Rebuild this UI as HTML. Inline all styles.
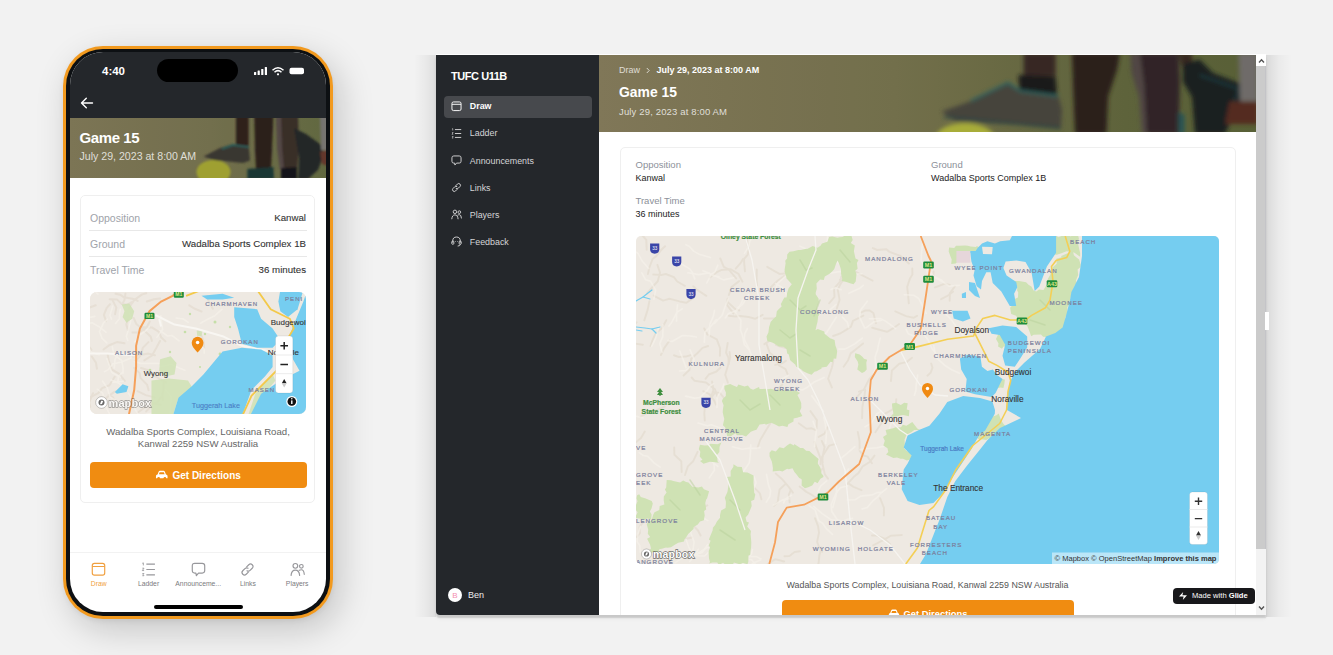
<!DOCTYPE html>
<html><head><meta charset="utf-8">
<style>
*{box-sizing:border-box;margin:0;padding:0}
html,body{width:1333px;height:655px;overflow:hidden}
body{background:#f2f2f2;position:relative;font-family:"Liberation Sans",sans-serif;color:#222}
.a{position:absolute}
.t{position:absolute;white-space:nowrap;line-height:1}
/* phone */
#ph-shadow{display:none}
#ph-o{left:63px;top:46px;width:270px;height:573px;border-radius:40px;background:#f29a1f;box-shadow:7px 11px 34px rgba(0,0,0,.19),0 2px 5px rgba(0,0,0,.06)}
#ph-b{left:66px;top:49px;width:264px;height:567px;border-radius:37px;background:#0d1013}
#ph-s{left:70px;top:52px;width:256px;height:560px;border-radius:33px;background:#fff;overflow:hidden}
/* desktop */
#win-shadow{left:436px;top:55px;width:830px;height:560px;border-radius:0 0 0 4px;box-shadow:0 2.5px 1.5px rgba(0,0,0,.15),0 4px 5px rgba(0,0,0,.03),0 -1px 0 rgba(255,255,255,.9)}
#shL{left:414px;top:55px;width:22px;height:562px;background:linear-gradient(to right,rgba(0,0,0,0),rgba(0,0,0,.035) 50%,rgba(0,0,0,.085))}
#shR{left:1266px;top:55px;width:26px;height:562px;background:linear-gradient(to left,rgba(0,0,0,0),rgba(0,0,0,.03) 50%,rgba(0,0,0,.1))}
#side{left:436px;top:55px;width:163px;height:560px;background:#24272b;border-radius:0 0 0 4px}
#main{left:599px;top:55px;width:657px;height:560px;background:#fff;overflow:hidden}
#sb{left:1256px;top:55px;width:10px;height:560px;background:#f3f3f3}
</style></head>
<body>
<div id="ph-shadow" class="a"></div>
<div id="ph-o" class="a"></div>
<div id="ph-b" class="a"></div>
<div id="ph-s" class="a">
  <div class="a" style="left:0;top:0;width:256px;height:66px;background:#24272b"></div>
  <div class="t" style="left:32px;top:14px;font-size:11.5px;font-weight:bold;color:#fff">4:40</div>
  <div class="a" style="left:87px;top:7px;width:81px;height:23px;border-radius:12px;background:#000"></div>
  <svg class="a" style="left:183px;top:14px" width="54" height="10" viewBox="0 0 54 10">
    <rect x="1" y="6" width="2.2" height="3" rx=".5" fill="#fff"/>
    <rect x="4.6" y="4.5" width="2.2" height="4.5" rx=".5" fill="#fff"/>
    <rect x="8.2" y="3" width="2.2" height="6" rx=".5" fill="#fff"/>
    <rect x="11.8" y="1" width="2.2" height="8" rx=".5" fill="#fff"/>
    <path d="M19.5 4.2 Q25 -0.8 30.5 4.2" stroke="#fff" stroke-width="1.5" fill="none"/>
    <path d="M21.5 6.2 Q25 3 28.5 6.2" stroke="#fff" stroke-width="1.5" fill="none"/>
    <circle cx="25" cy="8.3" r="1.1" fill="#fff"/>
    <rect x="36.5" y="1.8" width="14.5" height="6.5" rx="2" fill="#fff"/>
  </svg>
  <svg class="a" style="left:10px;top:45px" width="14" height="12" viewBox="0 0 14 12">
    <path d="M12.5 6 H1.8 M6.3 1.3 L1.5 6 L6.3 10.7" stroke="#fff" stroke-width="1.4" fill="none" stroke-linecap="round" stroke-linejoin="round"/>
  </svg>
  <div class="a" style="left:0;top:66px;width:256px;height:60px;overflow:hidden"><svg width="256" height="60" viewBox="0 0 256 60" style="display:block">
<defs><linearGradient id="pg1" x1="0" x2="1" y1="0" y2="0"><stop offset="0" stop-color="#847d5b"/><stop offset=".55" stop-color="#7a7652"/><stop offset="1" stop-color="#686f45"/></linearGradient>
<filter id="bl1" x="-5%" y="-5%" width="110%" height="110%"><feGaussianBlur stdDeviation="1"/></filter></defs>
<rect width="256" height="60" fill="url(#pg1)"/><g filter="url(#bl1)">
<ellipse cx="143.5" cy="54" rx="17" ry="12" fill="#a9ab36"/>
<rect x="166" y="-2" width="12.6" height="30" fill="#30241f"/>
<path d="M133.6,38.5 L150,30 L163,26 L178.6,27.8 L180,42.4 L173,45 L143.8,42 Z" fill="#3d3b35"/>
<path d="M152,31 L163,27 L178.6,29" stroke="#2a6a66" stroke-width="1.6" fill="none"/>
<path d="M184.3,-2 L203.4,-2 L202,30 L201,52 L186,52 L185,30 Z" fill="#2d201d"/>
<path d="M177.5,51 L203.4,49 L204,61 L177.5,61 Z" fill="#1d3a39"/>
<path d="M206,-2 L228,-2 L229,30 L227,52 L212,52 L208,30 Z" fill="#3e302c"/>
<path d="M206,-2 L211,-2 L212,30 L214,52 L210,52 L207,30 Z" fill="#5a4e4b"/>
<path d="M211,50 L227,49 L227,61 L211,61 Z" fill="#17191a"/>
<path d="M224,10 L236,16 L250,26 L254,36 L248,52 L238,61 L228,61 L229,40 L226,22 Z" fill="#262c2b"/>
<path d="M250,-2 L258,-2 L258,32 L251,32 Z" fill="#7e7c77"/>
<path d="M250,34 L258,32 L258,48 L252,46 Z" fill="#6a3a2e"/>
</g><rect width="256" height="60" fill="rgba(0,0,0,.06)"/>
</svg></div>
  <div class="t" style="left:9.5px;top:78px;font-size:15px;font-weight:bold;color:#fff;letter-spacing:-.4px">Game 15</div>
  <div class="t" style="left:9.5px;top:99px;font-size:10.6px;color:rgba(255,255,255,.78)">July 29, 2023 at 8:00 AM</div>
  <div class="a" style="left:10px;top:143px;width:235px;height:308px;border:1px solid #efefef;border-radius:5px"></div>
  <div class="a" style="left:18.5px;top:178px;width:218px;height:1px;background:#e8e8e8"></div>
  <div class="a" style="left:18.5px;top:204px;width:218px;height:1px;background:#e8e8e8"></div>
  <div class="t" style="left:20px;top:161px;font-size:10.5px;color:#a0a3aa">Opposition</div>
  <div class="t" style="right:20px;top:161px;font-size:9.7px;color:#333;-webkit-text-stroke:.1px #333">Kanwal</div>
  <div class="t" style="left:20px;top:187px;font-size:10.5px;color:#a0a3aa">Ground</div>
  <div class="t" style="right:20px;top:187px;font-size:9.7px;color:#333;-webkit-text-stroke:.1px #333">Wadalba Sports Complex 1B</div>
  <div class="t" style="left:20px;top:213px;font-size:10.5px;color:#a0a3aa">Travel Time</div>
  <div class="t" style="right:20px;top:213px;font-size:9.7px;color:#333;-webkit-text-stroke:.1px #333">36 minutes</div>
  <div class="a" style="left:20px;top:240px;width:216px;height:122px;border-radius:7px;overflow:hidden;background:#eee7dd"><svg width="216" height="122" viewBox="0 0 216 122" style="display:block;font-family:'Liberation Sans',sans-serif"><rect width="216" height="122" fill="#eee9e2"/><g fill="none" stroke="#d9cfbd" stroke-width="2" stroke-linecap="round" stroke-linejoin="round" opacity=".35"><path d="M54.3,68.3 L62.0,63.5 L66.4,55.8 L70.0,49.0"/><path d="M1.8,64.5 L6.0,70.8 L6.9,76.7"/><path d="M37.8,28.0 L36.3,32.4 L37.9,37.9"/><path d="M47.7,8.9 L43.6,7.0 L34.0,5.3 L30.1,2.7 L25.5,1.8"/><path d="M0.1,105.4 L8.3,101.2 L12.1,96.1 L19.4,93.2 L24.7,84.8"/><path d="M44.2,75.9 L49.6,81.1 L50.6,86.1 L57.2,92.9 L58.6,98.2"/><path d="M5.7,13.3 L-2.1,16.1 L-8.7,22.0 L-13.5,25.2"/><path d="M25.5,111.6 L23.0,105.4 L18.6,103.0"/><path d="M70.8,112.7 L61.1,111.1 L54.7,115.5 L47.9,120.5"/><path d="M56.8,9.5 L63.9,7.2 L70.1,6.4"/><path d="M65.0,63.3 L58.3,61.6 L50.2,63.0 L42.7,64.4"/><path d="M59.8,29.5 L56.7,35.3 L48.8,40.6 L42.5,40.5"/><path d="M13.5,57.5 L19.2,53.2 L26.9,50.1 L34.5,51.3"/><path d="M3.0,101.2 L-0.8,110.4 L0.2,114.9"/><path d="M1.3,57.6 L-4.1,50.8 L-9.5,42.8"/><path d="M45.2,69.4 L50.6,63.6 L52.9,55.6 L58.5,50.1"/><path d="M41.8,10.1 L36.9,12.8 L31.6,11.9 L26.9,7.4 L19.7,7.2"/><path d="M34.8,88.9 L28.9,81.6 L21.9,77.7 L18.8,69.0 L17.8,63.2"/><path d="M61.9,48.9 L60.6,44.5 L53.6,38.0 L46.3,31.9 L43.7,26.0"/><path d="M117.3,4.3 L119.0,10.0 L122.9,16.7"/><path d="M64.6,105.4 L55.8,103.1 L47.5,99.2"/><path d="M16.1,29.2 L13.9,22.9 L16.6,16.2 L20.0,12.2"/><path d="M22.7,8.6 L26.3,15.4 L25.1,22.2"/><path d="M114.2,56.4 L113.6,49.8 L112.0,44.8 L108.1,38.1"/><path d="M75.5,49.4 L71.1,45.2 L69.0,39.9 L61.8,35.4 L52.2,35.2"/><path d="M56.3,1.3 L52.1,2.4 L44.2,8.1 L41.1,12.5 L38.8,17.0"/><path d="M73.8,90.1 L73.4,98.7 L72.3,102.6 L72.9,108.2"/><path d="M111.6,19.5 L104.9,16.8 L99.3,13.3"/><path d="M35.5,1.7 L34.4,8.1 L32.4,11.9"/><path d="M56.2,119.4 L59.1,116.3 L61.8,112.4 L67.5,110.1 L71.2,105.2"/><path d="M13.7,108.9 L17.6,104.8 L24.3,99.9 L29.2,98.4 L33.5,95.0"/><path d="M51.0,76.0 L59.2,78.5 L62.1,82.5 L70.7,87.5 L76.0,90.4"/></g><g fill="none" stroke="#f7f3ec" stroke-width="1.6" stroke-linecap="round" stroke-linejoin="round" opacity=".6"><path d="M22.3,54.5 L23.8,62.5 L31.7,68.5 L33.1,76.3 L33.0,81.3"/><path d="M70.9,23.8 L71.7,31.8 L72.7,37.3 L66.9,45.4"/><path d="M8.0,2.1 L0.8,-4.0 L-7.1,-10.0"/><path d="M7.2,97.2 L12.9,101.3 L14.5,109.8 L16.4,115.8 L20.9,124.7"/><path d="M25.6,31.5 L29.5,26.6 L29.4,21.3 L30.3,17.3"/><path d="M22.8,90.2 L29.1,89.7 L33.5,89.2"/><path d="M21.1,87.9 L28.4,91.0 L32.1,93.4"/><path d="M44.3,69.8 L50.8,71.4 L59.1,71.3 L68.8,71.4"/><path d="M38.3,121.9 L42.4,123.0 L47.2,129.9 L56.4,133.4 L60.8,133.9"/><path d="M69.9,74.3 L75.4,73.7 L81.2,72.2 L88.6,75.8 L94.9,78.3"/><path d="M110.5,31.2 L117.2,27.5 L124.8,23.7 L132.0,17.3"/><path d="M70.0,38.6 L77.6,44.0 L82.0,43.5 L89.1,48.9"/><path d="M38.4,101.1 L42.8,108.1 L45.3,113.4 L45.2,117.5 L48.8,123.2"/><path d="M64.2,78.1 L59.8,80.7 L55.5,83.4"/><path d="M60.0,121.6 L59.7,126.1 L53.9,132.1 L52.7,138.7 L49.2,147.5"/><path d="M86.1,26.0 L93.3,27.0 L98.2,30.3"/><path d="M56.5,122.0 L64.6,121.3 L70.2,125.4 L71.2,129.8 L75.6,135.4"/><path d="M16.9,66.5 L19.3,73.3 L21.8,80.5 L30.5,85.1"/><path d="M29.6,60.2 L26.9,64.0 L25.0,67.7 L24.3,75.9"/><path d="M12.6,89.2 L17.3,96.0 L19.9,104.9 L26.6,108.9 L30.4,115.5"/><path d="M27.9,90.4 L28.4,84.5 L32.1,80.7"/><path d="M75.4,97.5 L81.3,104.8 L80.9,109.5 L80.2,118.0 L79.5,126.1"/><path d="M22.7,14.0 L20.0,23.2 L21.5,27.3"/><path d="M4.9,24.4 L-1.4,25.7 L-5.3,28.8 L-8.5,31.4"/><path d="M16.0,40.2 L9.3,34.9 L2.0,30.8 L-3.9,31.8"/><path d="M9.2,62.8 L1.0,60.2 L-0.9,56.6"/><path d="M40.9,65.9 L31.8,70.0 L23.1,71.8 L18.3,77.6 L14.5,79.6"/><path d="M59.3,34.7 L55.6,39.0 L49.5,43.2 L44.7,50.0"/><path d="M37.8,48.5 L36.3,44.4 L38.3,38.1 L40.8,28.6 L39.8,21.5"/><path d="M16.8,50.9 L12.1,46.4 L9.5,39.6 L13.6,30.8 L17.6,27.1"/><path d="M114.2,61.3 L114.2,57.0 L110.5,52.8"/></g><g fill="#c5dfa8"><circle cx="125" cy="30" r="1.5"/><circle cx="115" cy="42" r="1.2"/><circle cx="95" cy="40" r="1.3"/><circle cx="80" cy="60" r="1.2"/><circle cx="130" cy="62" r="1.4"/><circle cx="110" cy="75" r="1.1"/><circle cx="100" cy="22" r="1.2"/><circle cx="140" cy="35" r="1.2"/><circle cx="60" cy="78" r="1.3"/></g><g fill="#cfe2b4" opacity=".85"><path d="M70.1,67.2 L80.7,64.3 L86.5,71.1 L84.5,82.6 L74.9,84.5 L69.2,78.8 Z"/><path d="M61.5,88.4 L78.8,86.5 L98.0,88.4 L103.8,98.0 L88.4,105.7 L82.6,124.9 L61.5,124.9 Z"/><path d="M31.7,12.4 L39.3,11.5 L44.2,19.2 L42.2,26.8 L36.5,30.7 L32.6,24.9 L34.5,19.2 Z"/><path d="M157.6,124.9 L165.3,101.8 L182.6,82.6 L185.5,88.4 L171.1,105.7 L163.4,124.9 Z"/><path d="M106.7,38.8 L112.4,39.3 L111.5,44.2 L107.2,43.8 Z"/></g><g fill="none" stroke="#f8f6f2" stroke-width="2" stroke-linejoin="round"><path d="M65.3,23.0 L84.5,32.6 L105.7,36.5 L132.6,44.2 L151.8,53.8 L171.1,57.6 L190.3,61.5"/><path d="M-2.0,61.5 L17.2,61.5 L46.1,63.4"/><path d="M69.2,26.8 L71.1,34.5"/></g><g fill="#75cdf0"><path d="M82.6,124.9 L88.4,105.7 L101.8,94.2 L113.4,82.6 L123.0,71.1 L132.6,59.5 L151.8,55.7 L171.1,57.6 L182.6,63.4 L182.6,74.9 L174.9,84.5 L161.5,98.0 L151.8,124.9 Z"/><path d="M217.2,-2.0 L213.4,9.5 L203.8,32.6 L198.0,48.0 L201.8,65.3 L209.5,78.8 L190.3,88.4 L171.1,101.8 L159.5,124.9 L217.2,124.9 Z"/><path d="M144.2,15.3 L167.2,17.2 L171.1,26.8 L182.6,36.5 L190.3,48.0 L182.6,55.7 L167.2,55.7 L151.8,51.8 L148.0,36.5 L144.2,24.9 Z"/><path d="M190.3,-2.0 L213.4,-2.0 L207.6,17.2 L198.0,24.9 L190.3,19.2 L188.4,9.5 Z"/><path d="M24.9,99.9 L32.6,92.2 L38.4,94.2 L36.5,99.9 L26.8,101.8 Z"/><path d="M111.5,3.8 L132.6,1.8 L144.2,5.7 L132.6,7.6 L117.2,7.6 Z"/></g><path d="M167.2,-2.0 L180.7,17.2 L199.9,26.8 L203.8,36.5 L198.0,46.1 L190.3,74.9 L180.7,84.5 L161.5,103.8 L151.8,124.9" stroke="#f3c94a" stroke-width="1.8" fill="none"/><path d="M96.1,3.8 L111.5,-2.0" stroke="#f3c94a" stroke-width="1.8" fill="none"/><path d="M38.4,124.9 L44.2,98.0 L46.1,74.9 L46.1,53.8 L49.9,36.5 L59.5,19.2 L71.1,9.5 L82.6,3.8 L90.3,-2.0" stroke="#f5a05a" stroke-width="2" fill="none"/><text x="115.3" y="14.4" font-size="6.1" fill="#7b7f9c" stroke="#7b7f9c" stroke-width="0.2" letter-spacing="1.0" font-weight="normal">CHARMHAVEN</text><text x="130.7" y="52.0" font-size="6.1" fill="#7b7f9c" stroke="#7b7f9c" stroke-width="0.2" letter-spacing="1.0" font-weight="normal">GOROKAN</text><text x="24.9" y="62.5" font-size="6.1" fill="#7b7f9c" stroke="#7b7f9c" stroke-width="0.2" letter-spacing="1.0" font-weight="normal">ALISON</text><text x="158.6" y="100.0" font-size="6.1" fill="#7b7f9c" stroke="#7b7f9c" stroke-width="0.2" letter-spacing="1.0" font-weight="normal">MASEN</text><text x="195.0" y="8.7" font-size="6.1" fill="#7b7f9c" stroke="#7b7f9c" stroke-width="0.2" letter-spacing="1.0" font-weight="normal">PENI</text><text x="180.7" y="32.8" font-size="8" fill="#333" stroke="#333" stroke-width="0.1" letter-spacing="0" font-weight="normal">Budgewoi</text><text x="177.8" y="63.3" font-size="8" fill="#333" stroke="#333" stroke-width="0.1" letter-spacing="0" font-weight="normal">Noraville</text><text x="53.8" y="84.3" font-size="7.8" fill="#333" stroke="#333" stroke-width="0.1" letter-spacing="0" font-weight="normal">Wyong</text><text x="101.8" y="115.5" font-size="7.2" fill="#4a7cc4" stroke="#4a7cc4" stroke-width="0.1" letter-spacing="0" font-weight="normal">Tuggerah Lake</text><rect x="54.5" y="20.7" width="10" height="6.4" rx="1.2" fill="#1f8c3b"/><text x="59.5" y="25.799999999999997" font-size="5" fill="#dfe58a" text-anchor="middle" font-weight="bold">M1</text><rect x="83.8" y="-0.7000000000000002" width="10" height="6.4" rx="1.2" fill="#1f8c3b"/><text x="88.8" y="4.4" font-size="5" fill="#dfe58a" text-anchor="middle" font-weight="bold">M1</text><path d="M107.6,60.5 C102,55 101.8,53 101.8,50.6 A5.8,5.8 0 0 1 113.4,50.6 C113.4,53 113.2,55 107.6,60.5 Z" fill="#f08a12"/><circle cx="107.6" cy="50.5" r="1.8" fill="#fff"/><rect x="185.5" y="44" width="17.3" height="57" rx="3" fill="#fff" stroke="rgba(0,0,0,.12)" stroke-width=".6"/><path d="M185.5,63 H202.8 M185.5,81.7 H202.8" stroke="#e6e6e6" stroke-width=".8"/><path d="M194.2,50 V57.6 M190.4,53.8 H198 M190.4,72.6 H198" stroke="#222" stroke-width="1.5"/><path d="M194.2,87 L196.6,91.3 H191.8 Z" fill="#222"/><path d="M194.2,95.6 L196.6,91.3 H191.8 Z" fill="#ccc"/><circle cx="201.8" cy="109.5" r="5.5" fill="#fff"/><circle cx="201.8" cy="109.5" r="4.3" fill="#111"/><rect x="201.1" y="108.4" width="1.4" height="3.6" fill="#fff"/><circle cx="201.8" cy="106.8" r=".8" fill="#fff"/><circle cx="11.5" cy="110.5" r="5.8" fill="#fff" stroke="rgba(0,0,0,.3)" stroke-width=".7"/><circle cx="11.5" cy="110.5" r="3" fill="#6a6a6a"/><path d="M10,112.2 L11.2,108.7 L13.2,108.9 L12,111.9 Z" fill="#fff"/><g opacity=".7"><text x="18.5" y="114.6" font-size="11" font-weight="bold" fill="#fff" stroke="rgba(60,60,60,.7)" stroke-width="1.3" paint-order="stroke" letter-spacing=".1">mapbox</text></g></svg></div>
  <div class="a" style="left:0;top:374px;width:256px;text-align:center;font-size:9.65px;line-height:11.8px;color:#666">Wadalba Sports Complex, Louisiana Road,<br>Kanwal 2259 NSW Australia</div>
  <div class="a" style="left:19.5px;top:409.5px;width:217px;height:26.5px;border-radius:4px;background:#f08c11"></div>
  <div class="t" style="left:0;top:418px;width:256px;text-align:center;font-size:10px;font-weight:bold;color:#fff"><svg width="13.5" height="10" viewBox="0 0 12 9" style="vertical-align:-1px;margin-right:1px"><path d="M2.2 4 L3.3 1.3 Q3.6 0.6 4.4 0.6 H7.6 Q8.4 0.6 8.7 1.3 L9.8 4 Q11.2 4.3 11.2 5.5 V7.4 H0.8 V5.5 Q0.8 4.3 2.2 4 Z" fill="#fff"/><circle cx="3.2" cy="7.4" r="1.2" fill="#f08c11"/><circle cx="8.8" cy="7.4" r="1.2" fill="#f08c11"/><path d="M3.4 3.9 L4.1 2 H7.9 L8.6 3.9 Z" fill="#f08c11"/></svg> Get Directions</div>
  <div class="a" style="left:0;top:500px;width:256px;height:1px;background:#f2f2f2"></div>
  <svg class="a" style="left:21.15px;top:510px" width="15" height="15" viewBox="0 0 14 14"><rect x="1.2" y="1.2" width="11.6" height="11" rx="2" fill="none" stroke="#f0a040" stroke-width="1.1"/><path d="M1.2 4.2 H12.8" stroke="#f0a040" stroke-width="1.1"/></svg><div class="t" style="left:-1.3500000000000014px;width:60px;text-align:center;top:529px;font-size:6.8px;color:#f0a040">Draw</div><svg class="a" style="left:71.1px;top:510px" width="15" height="15" viewBox="0 0 14 14"><path d="M5 2 H13 M5 7 H13 M5 12 H13" stroke="#98989c" stroke-width="1.1"/><path d="M1.2 1.2 L2.2 0.8 V3.2 M1.2 5.8 H2.8 L1.2 8 H2.9 M1.2 10.8 H2.8 L2 11.8 L2.8 12.8 H1.2" stroke="#98989c" stroke-width=".8" fill="none"/></svg><div class="t" style="left:48.599999999999994px;width:60px;text-align:center;top:529px;font-size:6.8px;color:#7a7a7e">Ladder</div><svg class="a" style="left:120.69999999999999px;top:510px" width="15" height="15" viewBox="0 0 14 14"><path d="M3.5 1.2 H10.5 Q12.8 1.2 12.8 3.5 V8 Q12.8 10.3 10.5 10.3 H7 L5 12.8 L4.6 10.3 H3.5 Q1.2 10.3 1.2 8 V3.5 Q1.2 1.2 3.5 1.2 Z" fill="none" stroke="#98989c" stroke-width="1.1" stroke-linejoin="round"/></svg><div class="t" style="left:98.19999999999999px;width:60px;text-align:center;top:529px;font-size:6.8px;color:#7a7a7e">Announceme...</div><svg class="a" style="left:170.4px;top:510px" width="15" height="15" viewBox="0 0 14 14"><path d="M6.2 4.6 L8.2 2.6 Q9.8 1 11.4 2.6 Q13 4.2 11.4 5.8 L9.4 7.8 Q8 9.2 6.5 8.2" fill="none" stroke="#98989c" stroke-width="1.1" stroke-linecap="round"/><path d="M7.8 9.4 L5.8 11.4 Q4.2 13 2.6 11.4 Q1 9.8 2.6 8.2 L4.6 6.2 Q6 4.8 7.5 5.8" fill="none" stroke="#98989c" stroke-width="1.1" stroke-linecap="round"/></svg><div class="t" style="left:147.9px;width:60px;text-align:center;top:529px;font-size:6.8px;color:#7a7a7e">Links</div><svg class="a" style="left:219.7px;top:510px" width="15" height="15" viewBox="0 0 14 14"><circle cx="5" cy="3.6" r="2.2" fill="none" stroke="#98989c" stroke-width="1.1"/><circle cx="10.6" cy="4" r="1.7" fill="none" stroke="#98989c" stroke-width="1.1"/><path d="M1 12.5 Q1.4 7.5 5 7.5 Q8.6 7.5 9 12.5" fill="none" stroke="#98989c" stroke-width="1.1" stroke-linecap="round"/><path d="M8.6 7.8 Q9.5 7.2 10.6 7.2 Q13 7.2 13.3 11.5" fill="none" stroke="#98989c" stroke-width="1.1" stroke-linecap="round"/></svg><div class="t" style="left:197.2px;width:60px;text-align:center;top:529px;font-size:6.8px;color:#7a7a7e">Players</div>
  <div class="a" style="left:84px;top:553px;width:89px;height:3.5px;border-radius:2px;background:#000"></div>
</div>

<div id="shL" class="a"></div><div id="shR" class="a"></div><div id="win-shadow" class="a"></div>
<div id="side" class="a"><div class="t" style="left:15px;top:15.5px;font-size:11px;font-weight:bold;color:#fff;letter-spacing:-.45px">TUFC U11B</div><div class="a" style="left:7.5px;top:40.5px;width:148px;height:22px;border-radius:4px;background:#47494d"></div><svg class="a" style="left:14.5px;top:45.9px" width="11" height="11" viewBox="0 0 14 14"><rect x="1.2" y="1.2" width="11.6" height="11" rx="2" fill="none" stroke="#fff" stroke-width="1.2"/><path d="M1.2 4.2 H12.8" stroke="#fff" stroke-width="1.2"/></svg><div class="t" style="left:33.8px;top:47.3px;font-size:8.9px;font-weight:bold;color:#fff">Draw</div><svg class="a" style="left:14.5px;top:72.9px" width="11" height="11" viewBox="0 0 14 14"><path d="M5 2 H13 M5 7 H13 M5 12 H13" stroke="#d4d4d6" stroke-width="1.2"/><path d="M1.2 1.2 L2.2 0.8 V3.2 M1.2 5.8 H2.8 L1.2 8 H2.9 M1.2 10.8 H2.8 L2 11.8 L2.8 12.8 H1.2" stroke="#d4d4d6" stroke-width=".8" fill="none"/></svg><div class="t" style="left:33.8px;top:74.3px;font-size:8.9px;font-weight:normal;color:#d4d4d6">Ladder</div><svg class="a" style="left:14.5px;top:100.30000000000001px" width="11" height="11" viewBox="0 0 14 14"><path d="M3.5 1.2 H10.5 Q12.8 1.2 12.8 3.5 V8 Q12.8 10.3 10.5 10.3 H7 L5 12.8 L4.6 10.3 H3.5 Q1.2 10.3 1.2 8 V3.5 Q1.2 1.2 3.5 1.2 Z" fill="none" stroke="#d4d4d6" stroke-width="1.2" stroke-linejoin="round"/></svg><div class="t" style="left:33.8px;top:101.7px;font-size:8.9px;font-weight:normal;color:#d4d4d6">Announcements</div><svg class="a" style="left:14.5px;top:127.1px" width="11" height="11" viewBox="0 0 14 14"><path d="M6.2 4.6 L8.2 2.6 Q9.8 1 11.4 2.6 Q13 4.2 11.4 5.8 L9.4 7.8 Q8 9.2 6.5 8.2" fill="none" stroke="#d4d4d6" stroke-width="1.2" stroke-linecap="round"/><path d="M7.8 9.4 L5.8 11.4 Q4.2 13 2.6 11.4 Q1 9.8 2.6 8.2 L4.6 6.2 Q6 4.8 7.5 5.8" fill="none" stroke="#d4d4d6" stroke-width="1.2" stroke-linecap="round"/></svg><div class="t" style="left:33.8px;top:128.5px;font-size:8.9px;font-weight:normal;color:#d4d4d6">Links</div><svg class="a" style="left:14.5px;top:154.1px" width="11" height="11" viewBox="0 0 14 14"><circle cx="5" cy="3.6" r="2.2" fill="none" stroke="#d4d4d6" stroke-width="1.2"/><circle cx="10.6" cy="4" r="1.7" fill="none" stroke="#d4d4d6" stroke-width="1.2"/><path d="M1 12.5 Q1.4 7.5 5 7.5 Q8.6 7.5 9 12.5" fill="none" stroke="#d4d4d6" stroke-width="1.2" stroke-linecap="round"/><path d="M8.6 7.8 Q9.5 7.2 10.6 7.2 Q13 7.2 13.3 11.5" fill="none" stroke="#d4d4d6" stroke-width="1.2" stroke-linecap="round"/></svg><div class="t" style="left:33.8px;top:155.5px;font-size:8.9px;font-weight:normal;color:#d4d4d6">Players</div><svg class="a" style="left:14.5px;top:181.4px" width="11" height="11" viewBox="0 0 14 14"><path d="M2.2 8.5 V6.5 Q2.2 1.3 7 1.3 Q11.8 1.3 11.8 6.5 V8.5" fill="none" stroke="#d4d4d6" stroke-width="1.2"/><rect x="1" y="6.5" width="2.6" height="4" rx="1" fill="none" stroke="#d4d4d6" stroke-width="1.2"/><rect x="10.4" y="6.5" width="2.6" height="4" rx="1" fill="none" stroke="#d4d4d6" stroke-width="1.2"/><path d="M11.8 10.5 Q11.8 12.8 8.5 12.8" fill="none" stroke="#d4d4d6" stroke-width="1.2"/><circle cx="5.5" cy="7" r=".6" fill="#d4d4d6"/><circle cx="8.5" cy="7" r=".6" fill="#d4d4d6"/></svg><div class="t" style="left:33.8px;top:182.8px;font-size:8.9px;font-weight:normal;color:#d4d4d6">Feedback</div><div class="a" style="left:12px;top:533px;width:14px;height:14px;border-radius:7px;background:#fff"></div><div class="t" style="left:12px;width:14px;text-align:center;top:536.5px;font-size:8px;color:#f48fb1">B</div><div class="t" style="left:32px;top:535.5px;font-size:9px;color:#eee">Ben</div></div>
<div id="main" class="a">
  <div class="a" style="left:0;top:0;width:657px;height:77px;overflow:hidden"><svg width="657" height="77" viewBox="0 0 657 77" style="display:block">
<defs><linearGradient id="dg1" x1="0" x2="1" y1="0" y2="0"><stop offset="0" stop-color="#887f5e"/><stop offset=".45" stop-color="#7a7650"/><stop offset=".8" stop-color="#646a3f"/><stop offset="1" stop-color="#5e663a"/></linearGradient>
<filter id="bl2" x="-5%" y="-5%" width="110%" height="110%"><feGaussianBlur stdDeviation="1.9"/></filter></defs>
<rect width="657" height="77" fill="url(#dg1)"/><g filter="url(#bl2)">
<ellipse cx="366" cy="84" rx="30" ry="16" fill="#b3b83c"/>
<rect x="424.6" y="-2" width="32" height="23" fill="#3b2b25"/>
<path d="M419.5,20 L456.6,21.4 L458,40.6 L420.7,38 Z" fill="#1d1f1f"/>
<path d="M342.5,56.6 L369.5,47 L409,27.8 L420.7,35.5 L459.2,40.6 L463,54.7 L461.8,74 L420.7,70 L356.6,66.2 Z" fill="#4b4841"/>
<path d="M372,46 L409,28 L421,36 L459,41" stroke="#2d6864" stroke-width="2.4" fill="none"/>
<path d="M345,62 L420,69 L462,73" stroke="#2a4a48" stroke-width="2" fill="none"/>
<path d="M473,-2 L521,-2 L518,15 L509,42 L507.5,79 L476,79 L474.5,42 Z" fill="#2e201d"/>
<path d="M531.5,-2 L579.5,-2 L581,27 L579.5,79 L545,79 L542,42 L533,19.5 Z" fill="#34272a"/>
<path d="M531.5,-2 L541,-2 L545,30 L548,79 L543,79 L540,42 L533,19.5 Z" fill="#564c4a"/>
<path d="M579.5,-2 L593,-2 L593,10 L583,12 Z" fill="#3a2a24"/>
<path d="M584,9 L600.5,4.5 L614,18 L645.5,30 L641,46.5 L626,79 L596,79 L593,42 L584,27 Z" fill="#1c2224"/>
<path d="M600,20 L640,34 L630,60" stroke="#22393b" stroke-width="3" fill="none"/>
<path d="M579.5,57 L585.5,60 L585.5,79 L579.5,79 Z" fill="#2a5a5a"/>
<path d="M639.5,-2 L659,-2 L659,46.5 L641,46.5 Z" fill="#76726f"/>
<path d="M630.5,46.5 L659,46.5 L659,69 L626,69 Z" fill="#5a2e24"/>
</g><rect width="657" height="77" fill="rgba(0,0,0,.06)"/>
</svg></div>
  <div class="t" style="left:20px;top:10.5px;font-size:9px;color:rgba(255,255,255,.75)">Draw</div>
  <svg class="a" style="left:46px;top:12px" width="6" height="7" viewBox="0 0 6 7"><path d="M1.8 1 L4.2 3.5 L1.8 6" stroke="rgba(255,255,255,.7)" stroke-width="1" fill="none"/></svg>
  <div class="t" style="left:57.5px;top:10.5px;font-size:9px;font-weight:bold;color:#fff">July 29, 2023 at 8:00 AM</div>
  <div class="t" style="left:20px;top:30.5px;font-size:13.9px;font-weight:bold;color:#fff">Game 15</div>
  <div class="t" style="left:20px;top:52px;font-size:9.5px;letter-spacing:.15px;color:rgba(255,255,255,.78)">July 29, 2023 at 8:00 AM</div>
  <div class="a" style="left:21px;top:92px;width:616px;height:500px;border:1px solid #efefef;border-radius:5px"></div>
  <div class="t" style="left:36.5px;top:105px;font-size:9.5px;color:#8c9099">Opposition</div>
  <div class="t" style="left:36.5px;top:118.5px;font-size:9px;color:#222">Kanwal</div>
  <div class="t" style="left:36.5px;top:141px;font-size:9.5px;color:#8c9099">Travel Time</div>
  <div class="t" style="left:36.5px;top:154.5px;font-size:9px;color:#222">36 minutes</div>
  <div class="t" style="left:332px;top:105px;font-size:9.5px;color:#8c9099">Ground</div>
  <div class="t" style="left:332px;top:118.5px;font-size:9px;color:#222">Wadalba Sports Complex 1B</div>
  <div class="a" style="left:37px;top:181px;width:583px;height:328px;border-radius:5px;overflow:hidden"><svg width="583" height="328" viewBox="636 236 583 328" style="display:block;font-family:'Liberation Sans',sans-serif"><rect x="636" y="236" width="583" height="328" fill="#eee9e2"/><g fill="none" stroke="#d9cfbd" stroke-width="2" stroke-linecap="round" stroke-linejoin="round" opacity=".35"><path d="M757.1,285.5 L756.6,280.8 L756.8,269.5"/><path d="M784.4,556.2 L789.5,556.0 L794.6,552.0 L800.0,551.2"/><path d="M728.9,295.0 L731.4,287.1 L739.1,281.1"/><path d="M767.0,398.9 L775.5,391.2 L782.2,384.6"/><path d="M728.6,364.2 L730.2,357.2 L729.6,352.1"/><path d="M704.2,328.5 L707.2,334.3 L716.8,339.4 L720.1,348.1 L719.9,355.7"/><path d="M673.9,355.3 L678.8,357.0 L685.6,356.6 L690.4,355.3"/><path d="M829.1,303.3 L834.5,296.9 L834.0,288.7 L841.1,280.4 L846.3,277.3"/><path d="M710.8,397.6 L713.4,390.3 L712.1,381.6"/><path d="M880.2,498.3 L884.0,507.8 L883.9,515.6"/><path d="M858.9,391.6 L863.7,390.0 L869.0,379.5 L874.4,373.3"/><path d="M684.9,285.8 L677.2,281.5 L674.1,277.3 L665.8,274.0 L661.4,275.0 L653.2,274.5"/><path d="M846.1,485.3 L854.0,476.6 L858.4,473.1 L862.7,466.3 L869.6,462.2 L874.5,455.6"/><path d="M689.5,525.6 L694.1,526.5 L697.8,530.3 L700.6,535.4"/><path d="M642.8,344.7 L631.6,343.0 L621.0,346.0"/><path d="M691.9,537.5 L687.5,538.4 L680.1,537.8 L670.6,544.3 L661.0,548.2"/><path d="M736.2,278.4 L728.6,269.4 L723.8,266.9 L720.3,258.5"/><path d="M727.9,382.6 L725.2,374.7 L728.6,363.5 L728.5,357.7 L726.1,352.7 L727.7,343.0"/><path d="M778.4,401.9 L782.8,402.5 L788.5,400.2 L791.2,393.8"/><path d="M778.7,391.7 L769.3,395.5 L764.0,404.6 L764.3,413.3"/><path d="M781.7,343.0 L789.8,339.1 L795.4,330.1 L801.7,325.1"/><path d="M895.3,311.4 L906.0,316.1 L913.4,317.8 L917.1,315.8"/><path d="M908.8,303.3 L908.2,296.3 L907.2,286.9 L910.0,278.4 L912.4,274.4 L912.3,268.4"/><path d="M717.4,396.6 L715.0,389.2 L706.1,382.6 L694.4,380.7 L691.7,377.5"/><path d="M872.2,327.7 L883.0,330.8 L887.1,331.8 L893.9,327.8 L899.1,324.0"/><path d="M775.2,364.9 L782.4,363.2 L786.1,360.7"/><path d="M872.0,535.6 L876.3,535.5 L883.5,538.1 L890.2,544.3"/><path d="M787.9,314.3 L781.0,320.3 L779.6,328.2 L774.4,334.7 L770.6,340.2 L764.3,344.2"/><path d="M643.5,521.6 L639.5,527.0 L639.9,533.2 L636.8,537.0"/><path d="M683.6,375.5 L689.4,370.1 L691.2,358.8 L697.3,353.3 L702.6,347.9 L708.1,346.0"/><path d="M799.6,486.5 L806.4,491.9 L811.5,494.6 L814.8,497.0 L822.1,499.5"/><path d="M820.4,464.2 L820.9,458.7 L826.2,450.3 L829.2,445.6 L835.5,444.0"/><path d="M644.8,431.5 L641.0,438.1 L636.0,442.3"/><path d="M775.8,344.8 L780.1,346.6 L790.8,349.4"/><path d="M789.6,502.3 L788.9,494.6 L790.6,490.4"/><path d="M873.1,545.4 L881.8,540.9 L890.6,535.8 L901.8,535.0"/><path d="M863.1,343.5 L856.3,349.0 L850.7,353.4 L848.1,360.2 L843.6,366.7"/><path d="M822.4,468.8 L817.8,474.9 L812.2,476.6 L802.2,479.0"/><path d="M784.1,561.5 L779.5,560.2 L775.3,559.2 L766.0,565.2"/><path d="M861.5,490.2 L853.5,486.8 L848.7,483.6"/><path d="M665.1,246.3 L661.6,249.5 L656.3,256.1 L652.6,259.0 L649.2,268.0 L647.9,274.1"/><path d="M798.4,287.4 L807.7,293.3 L812.4,295.8"/><path d="M709.8,277.5 L716.8,272.1 L721.1,270.1 L730.5,269.2 L738.4,273.8 L742.5,281.7"/><path d="M941.1,299.2 L946.9,296.2 L953.1,291.7"/><path d="M703.2,391.2 L709.4,394.2 L714.2,400.6 L715.9,404.6"/><path d="M686.9,517.1 L697.2,511.3 L707.3,505.4"/><path d="M815.6,430.1 L811.7,428.3 L806.4,428.7 L798.7,423.2"/><path d="M912.0,357.8 L906.5,362.1 L899.2,363.8 L891.9,370.6 L890.9,381.1"/><path d="M818.7,436.9 L824.6,433.6 L827.5,427.3"/><path d="M804.6,256.9 L809.1,261.1 L818.2,260.8 L825.0,261.3 L832.2,263.5"/><path d="M640.6,416.7 L647.7,412.7 L656.5,410.1 L664.7,406.5"/><path d="M650.5,346.0 L652.5,340.3 L655.6,333.4 L661.9,328.2 L666.3,320.2"/><path d="M871.9,463.3 L867.4,456.4 L863.2,455.5 L859.7,450.8 L859.5,440.5 L857.8,432.0"/><path d="M646.7,249.7 L646.3,239.8 L640.4,233.3"/><path d="M728.2,302.6 L734.9,308.7 L739.4,310.5"/><path d="M861.2,392.2 L858.4,395.4 L855.2,399.0"/><path d="M743.8,482.2 L751.4,484.7 L755.2,488.6 L759.9,493.4 L761.4,499.3"/><path d="M845.9,270.3 L843.6,277.1 L839.8,279.8"/><path d="M766.3,343.1 L769.6,352.5 L775.3,357.4 L778.9,365.3 L785.5,369.2 L787.8,374.7"/><path d="M697.6,451.8 L693.2,461.2 L687.9,466.4 L685.0,475.0"/><path d="M644.3,320.4 L647.7,309.6 L649.4,301.2"/><path d="M792.9,492.6 L788.5,486.7 L782.7,479.8 L775.7,473.6"/><path d="M712.7,392.0 L719.9,393.0 L723.6,397.3 L726.5,403.8 L726.6,408.8"/><path d="M853.0,271.8 L845.9,276.0 L840.1,284.7 L837.8,289.9 L839.6,299.9 L836.8,308.5"/><path d="M841.1,277.1 L845.9,273.8 L855.1,271.3 L863.3,275.9 L872.6,280.6"/><path d="M929.2,282.1 L933.1,277.9 L933.6,271.6"/><path d="M949.7,300.7 L949.9,293.2 L954.9,286.4"/><path d="M896.3,399.2 L895.6,406.5 L892.2,409.6 L884.3,414.2 L881.7,422.7 L875.4,432.2"/><path d="M763.9,318.5 L774.5,318.5 L782.4,317.3 L789.4,313.3 L798.4,315.5"/><path d="M785.0,271.6 L793.3,275.7 L800.1,284.8 L804.1,292.8 L806.5,302.0 L807.6,311.4"/><path d="M774.0,505.8 L777.9,502.0 L778.2,497.9 L779.6,489.4 L785.5,484.0"/><path d="M674.2,447.4 L674.4,454.8 L681.3,461.2 L681.7,472.1"/><path d="M908.9,263.6 L900.5,255.9 L889.5,251.9 L886.3,249.3 L877.2,250.0 L872.9,248.1"/><path d="M737.7,483.6 L739.8,495.2 L738.2,505.7 L739.3,514.5 L732.9,523.0"/><path d="M636.6,322.3 L633.2,326.0 L621.5,328.4"/><path d="M810.0,303.8 L806.4,310.5 L808.1,320.8"/><path d="M771.7,421.1 L765.7,430.8 L760.1,440.2 L757.6,447.5"/><path d="M927.4,375.7 L930.6,372.8 L932.5,367.7 L931.2,363.5"/><path d="M669.6,340.5 L664.2,348.1 L660.9,355.0"/><path d="M828.0,478.6 L824.9,474.4 L822.3,463.2 L822.6,456.9 L824.6,447.0 L821.8,441.0"/><path d="M934.8,287.5 L945.0,283.6 L949.9,285.0"/><path d="M814.6,442.0 L816.2,447.2 L820.3,457.6 L822.6,462.2"/><path d="M715.0,392.6 L708.0,402.1 L704.9,407.4 L704.3,413.2 L704.8,420.5"/><path d="M705.5,378.8 L708.8,374.5 L716.5,371.5 L720.3,367.7"/><path d="M829.9,350.0 L833.1,356.6 L833.3,361.6 L831.9,367.5 L828.1,378.7 L831.9,387.5"/><path d="M745.0,271.3 L744.2,263.1 L744.0,259.0 L747.8,254.6 L748.7,249.8 L746.6,239.5"/><path d="M767.2,266.8 L774.1,270.8 L779.5,273.9 L786.7,273.3 L793.6,267.9"/><path d="M762.6,314.8 L755.1,318.8 L748.8,317.0 L740.4,315.9 L735.3,316.6 L728.5,315.7"/><path d="M875.9,323.2 L873.4,313.0 L869.4,310.4 L865.3,310.5 L861.4,312.4"/><path d="M810.4,411.1 L816.9,420.1 L816.5,428.7"/><path d="M865.2,389.8 L864.6,395.3 L862.4,406.8 L862.1,418.2"/><path d="M800.6,256.3 L794.6,264.5 L787.2,273.9 L777.9,280.5 L771.1,286.9 L769.8,292.4"/><path d="M822.2,551.8 L818.9,546.5 L817.1,541.9 L819.0,532.6 L818.0,525.8 L815.0,518.2"/><path d="M863.4,315.6 L853.0,320.9 L851.0,326.6 L845.7,330.1 L840.1,333.5 L833.1,336.0"/><path d="M693.7,297.7 L686.2,302.8 L679.6,301.4 L669.4,298.8 L663.1,300.6 L653.7,295.6"/><path d="M706.4,295.8 L696.4,289.3 L693.3,286.2"/><path d="M647.0,293.5 L654.3,285.0 L657.8,281.2 L660.0,272.6 L657.4,264.9"/><path d="M735.7,268.6 L740.7,262.9 L743.0,259.1"/><path d="M821.3,547.5 L819.3,555.9 L818.6,563.1 L816.9,566.9 L812.9,569.3 L809.5,575.5"/><path d="M727.6,298.7 L726.9,304.9 L733.3,313.2 L737.7,315.6"/></g><g fill="none" stroke="#f7f3ec" stroke-width="1.6" stroke-linecap="round" stroke-linejoin="round" opacity=".6"><path d="M717.8,265.2 L714.9,272.0 L710.9,275.0 L706.8,283.0"/><path d="M855.0,446.6 L848.2,452.3 L841.9,457.7"/><path d="M745.2,558.5 L751.8,559.9 L756.4,565.6 L756.1,570.3 L754.4,580.4 L750.3,585.7"/><path d="M660.2,467.1 L654.3,463.2 L651.5,460.1 L647.7,456.3 L643.3,455.5 L639.2,452.7"/><path d="M798.5,417.5 L798.6,410.4 L796.7,406.2 L789.1,400.9 L778.6,402.9"/><path d="M892.0,420.4 L889.4,429.1 L891.2,433.3 L895.2,436.7 L899.2,438.6 L904.1,436.8"/><path d="M811.8,395.7 L817.6,403.7 L823.5,411.2"/><path d="M774.6,291.8 L777.7,283.4 L785.1,276.5 L787.0,270.9 L788.7,260.7"/><path d="M766.3,502.2 L769.9,496.3 L770.6,490.6 L768.5,485.3 L766.5,474.3"/><path d="M704.3,495.8 L699.9,504.8 L700.9,509.9 L698.6,513.4 L693.5,519.2 L686.1,524.2"/><path d="M716.4,319.6 L712.2,324.7 L704.9,332.4 L704.3,342.3"/><path d="M818.0,491.7 L820.6,486.0 L826.7,480.8"/><path d="M713.3,383.8 L709.5,386.4 L707.2,390.4 L699.8,397.5 L694.6,398.1 L685.5,396.1"/><path d="M788.5,375.2 L785.0,377.3 L778.2,380.7"/><path d="M668.9,326.2 L671.8,322.1 L677.1,312.1 L682.2,308.8"/><path d="M668.8,517.8 L675.1,520.1 L685.5,524.9"/><path d="M836.1,304.5 L828.2,311.3 L823.9,311.0 L817.7,316.1"/><path d="M689.8,561.5 L695.4,554.5 L702.5,552.4 L707.6,544.6"/><path d="M760.5,560.1 L754.5,562.4 L751.1,564.6"/><path d="M784.8,335.3 L780.1,328.6 L778.0,319.6"/><path d="M798.0,466.9 L790.7,462.4 L787.1,453.6"/><path d="M836.3,317.2 L830.9,325.7 L826.5,332.7 L823.2,335.7 L817.6,337.9 L814.5,343.2"/><path d="M915.5,336.8 L908.2,333.8 L906.2,329.4"/><path d="M809.2,505.9 L815.1,509.9 L818.6,520.7 L822.6,523.3 L826.1,528.3 L832.5,534.3"/><path d="M690.1,349.8 L693.9,359.1 L693.1,364.0 L685.8,370.5 L679.5,371.0"/><path d="M675.5,510.8 L676.6,516.8 L677.5,522.3 L681.6,533.1"/><path d="M744.5,253.1 L748.6,246.9 L749.9,241.1 L755.3,233.5"/><path d="M842.4,317.1 L847.2,322.1 L848.7,327.5"/><path d="M825.8,443.5 L826.4,432.4 L825.2,423.3 L823.7,417.0"/><path d="M694.4,555.8 L704.6,556.0 L708.2,552.5 L711.5,549.8 L722.6,546.1 L730.8,545.1"/><path d="M725.3,318.0 L728.5,313.5 L737.1,310.4 L740.2,305.4 L743.1,299.1"/><path d="M944.2,312.7 L950.7,318.9 L957.2,328.0 L964.1,336.9 L972.7,338.7"/><path d="M679.8,263.0 L689.7,268.9 L692.2,272.3 L694.8,278.9"/><path d="M847.4,485.9 L840.1,487.7 L835.7,494.0 L831.2,504.5 L831.7,511.4"/><path d="M710.4,257.6 L699.3,254.2 L693.9,251.4 L689.5,246.5 L685.9,244.7"/><path d="M942.2,280.5 L933.4,276.1 L927.7,267.7"/><path d="M841.2,289.7 L835.4,287.8 L830.9,289.4"/><path d="M747.4,328.6 L744.8,333.6 L744.3,339.5 L749.3,349.4 L751.5,355.6"/><path d="M723.9,384.0 L722.4,388.2 L717.2,397.4 L717.1,402.0 L716.9,407.5"/><path d="M775.4,283.4 L783.8,288.5 L787.6,298.3 L786.6,305.5 L787.1,314.4"/><path d="M752.5,549.6 L751.5,553.7 L745.0,561.8 L739.3,566.1 L731.4,574.5"/><path d="M643.0,417.9 L634.3,415.9 L626.3,415.8 L620.9,419.0 L611.0,424.7 L607.7,431.9"/><path d="M867.4,301.3 L860.3,310.4 L859.5,317.2 L864.6,327.8"/><path d="M880.2,338.1 L878.4,345.4 L877.7,349.6 L875.1,357.0 L875.9,367.1 L873.2,374.3"/><path d="M686.2,539.5 L688.7,547.1 L694.4,557.2"/><path d="M662.0,352.1 L659.8,343.5 L662.8,336.4 L662.9,324.7"/><path d="M931.0,274.7 L926.5,268.6 L921.2,260.7 L921.4,254.7 L922.4,243.9"/><path d="M732.4,446.7 L742.0,449.3 L748.2,448.2 L755.6,448.4 L759.9,447.6"/><path d="M721.4,428.4 L711.4,424.8 L707.3,425.7 L698.1,423.0"/><path d="M730.4,533.3 L736.3,534.1 L744.8,528.5"/><path d="M827.7,257.9 L826.0,254.2 L827.1,244.3 L827.7,234.4 L827.6,228.6 L824.1,224.0"/><path d="M734.9,314.4 L737.2,308.2 L742.6,304.4 L748.4,294.8"/><path d="M848.9,293.3 L859.3,288.6 L863.3,285.4"/><path d="M773.4,505.2 L782.1,500.1 L789.0,498.8"/><path d="M674.1,485.4 L677.3,490.6 L685.3,498.7 L695.4,499.4 L703.0,506.1"/><path d="M812.9,252.8 L807.5,249.6 L800.0,246.2"/><path d="M717.8,466.4 L710.0,460.0 L700.7,452.5"/><path d="M714.6,323.3 L722.2,315.3 L724.6,308.0 L728.4,298.7"/><path d="M709.1,335.9 L709.9,324.1 L713.4,316.1 L714.5,310.3"/><path d="M677.5,304.7 L676.5,315.5 L676.6,321.3"/><path d="M917.7,375.1 L916.3,384.2 L915.8,390.7 L914.4,395.2"/><path d="M882.3,492.2 L877.4,492.5 L872.3,494.9 L860.7,496.1 L855.0,499.8 L847.4,500.0"/><path d="M658.7,327.0 L655.8,337.9 L651.6,346.3"/><path d="M813.0,421.4 L816.4,429.8 L815.1,440.2 L814.6,446.6"/><path d="M936.3,354.4 L931.9,348.4 L928.1,340.0 L921.4,330.8 L921.0,326.3"/><path d="M865.0,426.7 L871.0,423.6 L876.7,414.0 L881.3,411.1"/><path d="M736.4,313.8 L740.9,320.3 L740.5,329.9 L742.3,334.9 L744.3,344.5 L748.8,349.4"/><path d="M761.1,559.0 L756.5,556.6 L749.2,556.5 L745.2,559.1 L738.8,561.3 L730.5,560.2"/><path d="M933.7,345.5 L935.7,357.1 L944.6,365.2 L951.7,369.7 L959.5,373.3"/><path d="M717.0,455.8 L713.6,460.1 L714.4,470.2 L709.2,477.9"/><path d="M832.8,507.5 L835.8,496.6 L836.5,492.5 L836.5,483.8 L844.2,474.7 L848.7,469.0"/><path d="M719.1,276.8 L713.3,275.8 L708.6,272.9 L698.5,274.6 L687.9,272.8"/><path d="M753.8,476.3 L756.1,482.4 L752.6,491.6 L750.9,496.6 L746.6,499.0 L741.5,497.9"/><path d="M862.3,338.2 L854.8,343.9 L844.9,349.1 L838.6,349.1"/><path d="M692.5,556.9 L692.7,552.2 L694.1,542.0 L690.7,532.5 L692.7,527.0 L697.4,518.8"/><path d="M926.3,313.4 L922.7,306.0 L918.6,298.4 L913.9,295.3 L904.3,294.7"/><path d="M668.1,340.6 L672.1,341.5 L682.5,335.5 L690.3,336.0 L696.3,337.0"/><path d="M846.0,522.6 L837.3,519.7 L832.0,511.7"/><path d="M697.2,553.8 L706.9,547.5 L711.3,548.0 L715.5,548.9"/><path d="M733.6,277.7 L723.4,279.9 L713.4,275.1 L703.0,270.7"/><path d="M804.8,268.8 L812.2,267.0 L821.4,261.9"/><path d="M793.9,317.9 L799.2,317.4 L805.7,316.6 L810.0,319.1 L811.2,323.3"/><path d="M698.2,510.0 L701.5,512.4 L704.4,518.5 L707.9,520.6"/><path d="M862.1,508.9 L867.3,507.4 L873.4,500.3 L877.8,496.9 L880.2,493.6 L886.6,488.6"/><path d="M852.5,518.4 L848.0,519.2 L842.5,521.4 L831.3,519.8 L822.2,513.7 L813.7,506.4"/><path d="M648.7,268.6 L641.8,260.5 L638.2,253.7 L632.3,249.0"/><path d="M959.5,285.3 L949.0,286.1 L943.2,282.0 L933.7,277.0 L927.6,273.3 L924.2,263.7"/><path d="M641.8,272.8 L645.7,279.8 L650.6,281.3 L655.6,290.2 L653.9,299.1"/><path d="M679.8,351.0 L684.0,361.9 L686.1,367.6"/><path d="M740.0,478.4 L744.1,470.5 L749.3,462.9 L750.4,453.3 L750.8,444.9"/><path d="M698.2,549.3 L695.5,554.9 L689.5,557.1 L684.2,556.6 L675.2,562.7"/><path d="M865.9,327.8 L873.9,321.9 L881.6,320.2"/><path d="M860.2,449.6 L866.5,448.7 L876.9,447.7 L883.8,446.4 L892.4,440.2 L899.7,431.1"/><path d="M798.3,389.3 L802.4,390.0 L807.4,387.2 L813.8,382.3 L824.2,377.6"/><path d="M829.2,273.2 L841.0,271.4 L847.6,274.8 L853.9,274.2 L861.9,273.7"/><path d="M791.4,495.3 L785.2,499.1 L783.7,502.9"/><path d="M828.0,246.5 L832.9,254.0 L833.3,258.5 L841.0,265.1 L849.9,269.0 L855.1,270.1"/><path d="M869.4,318.8 L880.6,318.6 L886.3,321.6 L895.6,328.6"/><path d="M640.4,526.4 L637.9,534.3 L637.1,541.5 L639.8,545.6 L640.2,552.4"/></g><g fill="none" stroke="#75cdf0" stroke-width="1.2" stroke-linecap="round"><path d="M636.0,301.0 L643.0,297.0 L648.0,293.0 L652.0,290.0"/><path d="M643.0,297.0 L650.0,299.0"/><path d="M636.0,327.0 L645.0,328.0 L652.0,329.0 L660.0,327.0"/><path d="M652.0,329.0 L656.0,333.0"/><path d="M636.0,330.0 L642.0,331.0"/></g><g fill="#cfe2b4"><path d="M787.2,254.4 L789.5,251.7 L793.5,251.3 L798.3,250.0 L800.9,250.1 L806.2,248.8 L807.7,248.8 L812.7,246.0 L817.5,247.7 L820.5,245.8 L822.0,243.5 L827.4,241.7 L829.1,237.1 L832.2,236.4 L837.5,237.7 L839.6,237.3 L842.5,237.1 L847.1,234.3 L851.4,235.6 L852.7,240.1 L850.8,242.9 L854.8,245.5 L853.9,251.2 L854.4,253.6 L855.5,258.5 L858.5,260.1 L856.9,263.1 L857.6,268.7 L855.3,270.8 L856.5,274.3 L856.1,277.7 L855.7,281.4 L853.5,284.3 L850.1,283.3 L846.5,282.1 L841.7,280.9 L842.3,279.1 L841.0,273.5 L841.1,272.9 L840.9,269.2 L839.9,266.0 L837.7,260.6 L836.1,263.5 L834.3,268.9 L832.4,271.3 L829.6,273.8 L824.8,276.6 L823.8,280.0 L820.1,279.5 L816.4,283.5 L816.8,288.7 L815.8,292.2 L815.7,294.3 L818.5,298.6 L818.9,301.7 L816.9,307.8 L816.9,311.3 L819.5,314.6 L818.2,316.3 L817.5,321.9 L816.8,324.6 L815.5,330.2 L817.7,328.9 L824.3,331.5 L824.6,333.7 L830.4,338.4 L830.9,338.6 L834.6,340.1 L835.4,345.5 L836.3,347.8 L837.2,351.3 L836.2,358.8 L833.6,358.5 L832.7,362.2 L830.5,361.8 L826.7,366.7 L821.6,367.6 L821.6,368.4 L816.6,371.3 L814.4,371.8 L811.6,374.7 L808.0,373.4 L803.2,371.2 L801.1,369.2 L796.2,366.7 L795.2,364.6 L791.0,361.0 L790.1,360.1 L788.8,354.4 L787.2,353.4 L786.5,348.9 L783.4,346.8 L779.0,346.5 L774.2,343.6 L772.1,342.6 L769.8,341.8 L767.4,341.2 L766.5,336.5 L768.4,332.4 L769.1,326.9 L770.0,324.3 L770.6,321.9 L773.5,318.7 L776.1,316.5 L776.8,311.2 L778.4,309.6 L781.6,306.4 L780.9,303.9 L784.3,297.4 L786.5,297.4 L787.1,293.1 L788.6,288.2 L791.8,284.2 L790.5,282.8 L786.2,278.0 L786.5,277.3 L785.2,274.0 L784.6,269.8 L785.6,263.2 L785.2,260.8 L787.1,258.6 Z"/><path d="M724.4,385.7 L730.2,384.0 L732.8,385.2 L736.9,386.9 L738.4,384.6 L744.6,386.5 L747.9,385.5 L750.3,388.5 L753.1,389.8 L759.0,387.0 L759.6,389.1 L766.6,388.8 L767.7,389.2 L770.7,388.8 L775.9,390.0 L778.8,389.3 L782.5,390.4 L786.4,389.1 L792.1,391.3 L795.1,390.2 L800.1,392.9 L797.4,394.9 L800.0,400.1 L801.2,402.9 L801.3,407.7 L799.8,411.2 L802.4,416.0 L798.2,417.4 L793.6,418.5 L793.5,421.5 L788.4,424.3 L787.4,427.0 L782.4,425.7 L779.0,426.4 L775.2,424.6 L771.2,422.8 L765.7,424.7 L765.2,423.8 L759.6,424.6 L756.5,429.8 L754.0,430.5 L750.8,431.7 L746.0,436.6 L742.2,434.9 L737.0,435.2 L735.5,433.2 L730.8,436.2 L727.1,435.9 L726.4,431.4 L725.1,427.3 L722.9,425.2 L724.3,419.1 L723.6,416.4 L722.7,412.2 L722.9,409.4 L723.6,405.3 L721.9,401.0 L722.9,398.8 L725.8,396.0 L725.9,392.6 L724.4,389.1 Z"/><path d="M794.1,445.4 L794.2,444.0 L800.3,448.0 L803.1,448.1 L806.1,450.8 L809.4,450.9 L812.1,453.4 L816.5,457.2 L818.6,458.9 L818.0,461.2 L817.8,463.6 L820.5,468.0 L821.5,473.4 L823.2,475.5 L823.5,476.9 L820.4,478.7 L817.6,483.3 L814.8,481.8 L812.2,485.5 L808.2,487.3 L804.9,488.3 L801.6,485.6 L801.8,479.3 L799.2,477.9 L796.2,473.9 L794.4,471.9 L792.5,468.2 L788.6,469.3 L787.1,468.8 L782.5,471.4 L779.6,470.8 L774.4,471.2 L772.7,471.6 L772.9,467.9 L772.3,464.0 L771.8,461.4 L769.6,456.6 L769.5,452.8 L771.7,450.2 L775.8,451.6 L779.5,447.2 L783.6,448.3 L787.3,445.2 L790.0,443.5 Z"/><path d="M733.5,464.2 L737.4,466.7 L741.8,467.1 L743.1,472.2 L747.5,472.4 L753.6,475.6 L753.6,479.7 L753.5,482.6 L754.0,489.2 L754.2,492.8 L755.3,494.4 L754.2,499.7 L751.1,501.1 L751.7,506.1 L749.7,511.0 L748.2,514.5 L745.6,517.5 L746.6,521.7 L749.0,522.4 L747.2,526.6 L751.0,531.1 L750.6,534.3 L751.0,538.4 L751.3,542.8 L751.1,547.5 L750.5,551.2 L750.2,555.0 L748.5,555.6 L748.3,562.1 L747.5,564.2 L743.0,563.0 L739.7,564.3 L733.9,562.4 L732.2,565.8 L725.7,565.1 L723.1,562.7 L718.9,565.0 L717.2,562.4 L712.5,562.4 L709.1,563.4 L710.0,562.1 L709.0,558.4 L708.6,551.4 L709.9,547.6 L708.8,545.3 L710.6,540.7 L708.9,539.6 L710.2,536.2 L712.6,530.5 L712.9,527.7 L715.3,524.7 L716.9,521.5 L720.0,517.8 L720.0,515.3 L721.1,510.5 L725.6,508.1 L725.9,502.9 L725.8,501.3 L724.8,497.7 L727.4,491.9 L727.8,489.7 L728.4,485.5 L728.9,483.2 L726.9,477.0 L730.7,476.6 L730.6,471.1 L733.3,467.0 Z"/><path d="M666.7,480.1 L671.0,480.3 L673.4,481.1 L680.1,482.6 L683.2,480.5 L686.1,481.9 L688.5,482.5 L692.4,486.7 L698.3,487.5 L701.9,486.5 L703.9,489.2 L709.1,491.3 L708.9,492.1 L707.2,497.9 L706.1,499.7 L705.3,503.0 L706.2,509.4 L704.1,511.0 L704.7,515.6 L703.9,520.3 L700.0,521.6 L697.8,524.6 L693.7,527.1 L693.5,529.1 L688.2,534.1 L686.5,536.7 L684.6,539.0 L684.0,541.4 L678.3,542.7 L675.6,544.3 L671.0,547.2 L667.4,547.8 L665.9,547.5 L659.4,549.2 L658.3,551.9 L652.9,552.1 L649.1,553.9 L648.3,551.1 L651.0,548.4 L650.1,544.8 L647.1,538.7 L650.2,536.9 L647.8,533.8 L648.2,529.8 L646.7,523.9 L649.4,520.8 L651.3,520.9 L653.3,514.5 L654.5,512.2 L659.3,510.0 L659.7,506.1 L664.4,504.4 L663.7,500.2 L663.8,496.5 L666.6,492.4 L664.9,489.6 L666.2,487.4 Z"/><path d="M700.0,444.7 L704.7,445.4 L708.6,445.3 L710.1,443.7 L717.5,444.3 L721.4,442.4 L719.5,446.9 L719.4,452.1 L717.0,454.9 L717.6,461.5 L719.0,462.8 L714.8,462.2 L709.9,461.7 L703.5,463.8 L700.0,461.0 L702.5,459.7 L699.7,456.4 L700.3,451.7 L698.8,449.0 Z"/><path d="M637.1,495.2 L639.2,494.3 L640.8,497.0 L645.8,498.5 L648.7,499.8 L651.7,501.1 L652.8,503.5 L651.6,508.3 L649.9,511.6 L651.6,514.4 L651.1,519.7 L647.7,518.4 L641.5,520.1 L640.6,518.8 L634.5,517.9 L636.5,514.7 L637.6,512.2 L634.9,508.8 L635.5,506.3 L637.5,501.2 L636.5,498.3 Z"/><path d="M855.2,353.3 L859.6,354.4 L862.4,356.8 L864.0,358.7 L867.1,359.8 L866.3,362.8 L866.7,369.6 L864.6,371.7 L862.0,373.0 L857.3,369.6 L858.4,364.5 L857.7,361.5 L854.8,357.1 Z"/><path d="M1012.3,280.5 L1015.6,281.1 L1019.1,280.9 L1026.1,282.3 L1028.5,284.7 L1031.4,286.4 L1033.6,290.6 L1036.3,291.5 L1039.1,289.6 L1043.5,289.9 L1046.5,285.0 L1047.3,284.2 L1047.8,278.9 L1050.1,275.0 L1051.2,271.2 L1053.0,267.0 L1056.7,263.7 L1056.3,258.8 L1061.5,257.3 L1061.1,255.9 L1067.1,253.6 L1072.8,250.5 L1073.9,255.2 L1076.2,257.3 L1079.1,259.6 L1080.6,264.5 L1080.5,266.9 L1077.6,269.6 L1078.2,274.9 L1076.0,280.3 L1076.5,283.6 L1074.4,286.0 L1072.6,290.4 L1071.3,295.3 L1069.4,301.4 L1070.2,303.1 L1067.4,307.1 L1067.4,314.1 L1065.3,317.2 L1065.3,318.2 L1066.6,323.2 L1064.0,327.4 L1062.7,331.5 L1062.0,335.7 L1058.7,335.2 L1053.1,334.5 L1049.3,336.1 L1046.4,337.1 L1043.1,336.7 L1041.0,334.4 L1033.7,334.7 L1031.2,336.3 L1029.4,331.3 L1027.2,325.8 L1023.7,323.5 L1020.8,319.9 L1018.1,319.4 L1016.1,315.7 L1011.2,314.1 L1010.1,307.8 L1012.9,304.7 L1014.7,299.0 L1018.0,297.4 L1018.2,292.2 L1017.2,290.8 L1017.2,286.3 L1014.5,282.1 Z"/><path d="M1056.0,235.5 L1058.4,237.3 L1061.5,236.0 L1068.2,234.5 L1070.6,236.4 L1072.3,235.6 L1078.2,235.8 L1078.9,238.7 L1077.8,242.6 L1079.3,249.5 L1080.2,252.9 L1080.1,256.8 L1074.5,252.8 L1072.0,252.1 L1066.5,251.3 L1061.4,253.3 L1056.8,254.7 L1051.9,254.2 L1055.1,247.0 L1054.1,244.4 L1053.6,239.9 Z"/><path d="M892.0,403.6 L896.0,402.8 L900.8,405.1 L904.2,402.7 L907.7,403.3 L906.7,409.5 L909.4,410.2 L908.9,416.2 L903.2,415.0 L900.3,415.6 L896.3,416.4 L890.4,416.8 L893.4,413.5 L892.1,406.2 Z"/><path d="M885.6,429.9 L891.0,428.7 L893.2,428.3 L895.7,427.2 L901.0,427.3 L902.8,424.7 L906.4,425.7 L912.3,422.1 L917.3,428.4 L920.1,430.1 L914.3,429.9 L911.7,432.0 L906.5,434.7 L904.6,439.4 L904.8,444.8 L903.8,448.0 L906.3,450.8 L908.8,452.0 L913.4,457.3 L910.8,459.2 L906.9,460.4 L902.9,458.7 L900.6,458.7 L897.0,457.5 L893.4,457.9 L886.0,454.5 L888.3,451.9 L887.5,448.2 L883.3,445.5 L884.8,440.8 L883.0,437.0 L886.8,434.6 Z"/><path d="M977.6,420.6 L982.0,417.7 L983.4,417.4 L988.0,418.0 L993.3,416.2 L996.5,415.3 L998.7,413.5 L1000.5,418.5 L1001.9,421.5 L1003.7,424.3 L1006.4,426.7 L1005.0,427.5 L998.9,433.0 L997.3,432.3 L995.8,437.7 L989.4,438.1 L986.2,439.9 L983.0,439.4 L978.4,439.0 L976.5,437.6 L977.3,432.1 L978.0,428.2 L977.3,422.4 Z"/><path d="M949.1,247.4 L954.2,248.0 L956.0,245.7 L959.4,245.7 L965.1,245.4 L967.9,245.7 L970.6,246.5 L976.1,247.1 L976.7,245.9 L980.7,248.0 L979.9,250.0 L976.8,251.9 L972.4,252.1 L965.1,252.3 L963.6,255.4 L961.4,257.7 L958.3,261.2 L955.7,263.6 L951.2,264.1 L951.7,259.6 L950.2,255.7 L948.7,251.4 Z"/><path d="M1025.6,236.7 L1029.8,242.2 L1030.8,244.3 L1031.7,250.3 L1029.4,255.0 L1023.6,258.4 L1023.3,252.3 L1026.8,248.6 L1025.1,246.1 L1027.0,239.2 Z"/><path d="M998.7,333.2 L1001.5,333.8 L1006.1,333.3 L1009.4,335.7 L1009.3,341.0 L1007.1,342.8 L1008.7,346.7 L1003.5,346.5 L1002.0,348.8 L998.1,346.5 L998.5,343.4 L996.0,339.0 Z"/><path d="M996.5,378.9 L1000.8,378.8 L1004.9,379.6 L1004.3,384.3 L1003.4,388.0 L1000.5,387.4 L997.9,388.0 L998.0,385.5 Z"/></g><g fill="none" stroke="#b9d19c" stroke-width="1.6" stroke-linecap="round" opacity=".5"><path d="M800.0,260.0 L806.0,270.0 L812.0,268.0"/><path d="M790.0,300.0 L800.0,310.0 L806.0,306.0"/><path d="M780.0,330.0 L790.0,338.0 L796.0,334.0"/><path d="M800.0,350.0 L810.0,356.0"/><path d="M820.0,300.0 L814.0,316.0"/><path d="M740.0,400.0 L750.0,410.0 L760.0,404.0"/><path d="M770.0,395.0 L780.0,405.0"/><path d="M730.0,500.0 L740.0,510.0"/><path d="M720.0,530.0 L735.0,540.0"/><path d="M670.0,500.0 L680.0,510.0"/><path d="M690.0,480.0 L700.0,495.0"/><path d="M840.0,250.0 L850.0,262.0"/><path d="M1040.0,300.0 L1050.0,310.0"/><path d="M1030.0,320.0 L1045.0,325.0"/></g><g fill="none" stroke="#f6f4f0" stroke-width="1.3" stroke-linejoin="round"><path d="M815.0,236.0 L816.0,250.0 L808.0,270.0 L798.0,298.0 L796.0,330.0 L798.0,368.0 L808.0,380.0 L818.0,400.0 L830.0,430.0 L845.0,470.0 L850.0,520.0 L855.0,564.0"/><path d="M870.0,400.0 L885.0,415.0 L900.0,430.0 L915.0,440.0"/><path d="M745.0,236.0 L752.0,260.0 L759.0,300.0 L759.0,345.0 L765.0,380.0 L770.0,410.0"/><path d="M705.0,440.0 L720.0,460.0 L735.0,500.0 L745.0,530.0"/><path d="M900.0,350.0 L910.0,370.0 L920.0,385.0 L935.0,395.0 L948.0,396.0"/><path d="M850.0,520.0 L870.0,530.0 L890.0,545.0 L905.0,564.0"/></g><g fill="#75cdf0"><path d="M1082.0,236.0 L1219.0,236.0 L1219.0,564.0 L920.0,564.0 L926.0,554.0 L935.0,531.0 L939.4,520.0 L947.3,497.1 L955.2,481.3 L967.1,465.4 L980.0,449.5 L987.5,440.0 L1000.0,428.0 L1021.0,418.0 L1007.0,410.0 L1008.0,391.5 L1010.7,380.5 L1014.8,372.2 L1024.5,362.6 L1040.0,348.9 L1046.0,336.6 L1055.3,333.0 L1062.6,327.5 L1066.3,314.7 L1070.0,300.0 L1071.4,292.0 L1079.0,277.0 L1082.0,256.0 Z"/><path d="M947.3,401.9 L963.2,396.0 L980.0,397.9 L992.4,401.5 L995.0,410.0 L994.8,413.7 L985.0,430.8 L980.0,433.7 L971.1,449.5 L959.2,467.4 L951.3,479.3 L943.3,493.2 L933.4,503.1 L919.5,505.1 L907.6,501.1 L901.7,489.2 L903.7,469.4 L907.6,463.4 L911.6,455.5 L903.7,447.5 L907.6,435.6 L919.5,429.7 L929.4,425.7 L939.4,413.8 Z"/><path d="M988.7,328.2 L1002.5,325.5 L1016.2,326.9 L1027.2,336.5 L1027.2,347.5 L1020.3,358.5 L1014.8,366.7 L1005.2,365.4 L1002.5,355.7 L1005.2,344.7 L999.7,335.1 L991.5,333.7 Z"/><path d="M959.9,358.5 L968.1,354.4 L980.5,357.1 L981.9,366.7 L987.4,370.9 L992.9,369.5 L997.0,375.0 L1002.5,379.1 L999.7,384.6 L995.6,392.9 L991.5,397.0 L975.0,394.2 L965.4,391.5 L966.7,379.1 L961.2,369.5 Z"/><path d="M977.8,247.8 L982.0,243.5 L987.4,241.3 L994.9,243.5 L1000.2,241.3 L1009.8,240.3 L1012.0,236.0 L1056.1,236.0 L1056.1,252.8 L1046.9,266.5 L1039.3,286.4 L1034.7,291.0 L1031.6,272.7 L1025.5,262.0 L1016.4,260.4 L1005.6,261.6 L1003.4,268.0 L1006.6,275.5 L1016.2,282.0 L1017.3,287.3 L1014.1,293.7 L1016.2,306.0 L1009.8,306.0 L1001.3,291.6 L992.7,283.0 L990.6,272.3 L986.3,272.3 L982.0,280.9 L981.0,289.4 L976.7,286.2 L973.5,275.5 L974.6,270.2 L971.4,261.6 L970.3,253.1 L966.0,251.0 L975.6,251.0 Z"/><path d="M969.0,282.0 L975.0,283.0 L980.0,298.0 L975.0,296.0 L969.0,290.0 Z"/><path d="M961.8,293.7 L966.0,292.0 L966.0,298.0 L962.0,298.0 Z"/><path d="M952.2,310.8 L967.5,310.8 L970.5,318.5 L962.9,321.5 L953.7,318.5 Z"/></g><path d="M982.0,246.7 L992.7,247.0 L992.0,254.2 L983.0,254.0 Z" fill="#eee9e2"/><path d="M956.4,251.0 L970.3,251.0 L970.3,262.7 L956.4,262.7 Z" fill="#e6d6da"/><path d="M1065.2,236.0 L1069.8,251.3 L1066.8,257.4 L1056.1,260.4 L1051.5,266.5 L1053.0,281.8 L1050.0,300.2 L1045.4,307.8 L1031.6,315.4 L1025.5,320.0 L1010.3,320.0 L995.0,315.4 L982.8,318.5 L976.7,327.6 L973.6,336.0 L969.5,336.5 L947.5,339.2 L920.0,346.1 L900.0,350.8" stroke="#f4cf55" stroke-width="1.6" fill="none" stroke-linejoin="round"/><path d="M975.0,333.7 L980.5,344.7 L986.0,355.7 L988.7,361.2 L997.0,365.4 L1008.0,372.2 L1010.7,380.5 L1008.0,391.5 L1006.6,410.0 L999.7,423.5 L972.8,445.5 L955.7,470.0 L946.0,489.5 L933.7,506.6 L929.0,510.5 L917.4,548.0 L905.8,564.0" stroke="#f4cf55" stroke-width="1.6" fill="none" stroke-linejoin="round"/><path d="M920.7,236.0 L928.5,256.0 L931.0,261.0 L926.0,295.0 L920.8,328.7 L910.4,344.0 L900.0,350.8 L889.5,357.0 L876.6,370.0 L870.8,380.0 L869.3,397.4 L870.8,432.2 L859.2,464.0 L838.9,481.5 L827.3,493.1 L804.0,504.7 L786.7,507.6 L778.0,522.0 L775.0,542.5 L769.3,564.0" stroke="#f5a05a" stroke-width="1.8" fill="none" stroke-linejoin="round"/><g><text x="730" y="292" font-size="6.2" fill="#7b7f9c" stroke="#7b7f9c" stroke-width="0.2" letter-spacing="1.0" font-weight="normal" text-anchor="start">CEDAR BRUSH</text><text x="744" y="300" font-size="6.2" fill="#7b7f9c" stroke="#7b7f9c" stroke-width="0.2" letter-spacing="1.0" font-weight="normal" text-anchor="start">CREEK</text><text x="865" y="261" font-size="6.2" fill="#7b7f9c" stroke="#7b7f9c" stroke-width="0.2" letter-spacing="1.0" font-weight="normal" text-anchor="start">MANDALONG</text><text x="800" y="313.5" font-size="6.2" fill="#7b7f9c" stroke="#7b7f9c" stroke-width="0.2" letter-spacing="1.0" font-weight="normal" text-anchor="start">COORALONG</text><text x="906.5" y="327" font-size="6.2" fill="#7b7f9c" stroke="#7b7f9c" stroke-width="0.2" letter-spacing="1.0" font-weight="normal" text-anchor="start">BUSHELLS</text><text x="914.3" y="335" font-size="6.2" fill="#7b7f9c" stroke="#7b7f9c" stroke-width="0.2" letter-spacing="1.0" font-weight="normal" text-anchor="start">RIDGE</text><text x="688.4" y="366" font-size="6.2" fill="#7b7f9c" stroke="#7b7f9c" stroke-width="0.2" letter-spacing="1.0" font-weight="normal" text-anchor="start">KULNURA</text><text x="774" y="383" font-size="6.2" fill="#7b7f9c" stroke="#7b7f9c" stroke-width="0.2" letter-spacing="1.0" font-weight="normal" text-anchor="start">WYONG</text><text x="774" y="390.5" font-size="6.2" fill="#7b7f9c" stroke="#7b7f9c" stroke-width="0.2" letter-spacing="1.0" font-weight="normal" text-anchor="start">CREEK</text><text x="850.6" y="400.5" font-size="6.2" fill="#7b7f9c" stroke="#7b7f9c" stroke-width="0.2" letter-spacing="1.0" font-weight="normal" text-anchor="start">ALISON</text><text x="954.5" y="270" font-size="6.2" fill="#7b7f9c" stroke="#7b7f9c" stroke-width="0.2" letter-spacing="1.0" font-weight="normal" text-anchor="start">WYEE POINT</text><text x="1009" y="272.5" font-size="6.2" fill="#7b7f9c" stroke="#7b7f9c" stroke-width="0.2" letter-spacing="1.0" font-weight="normal" text-anchor="start">GWANDALAN</text><text x="1049.4" y="305" font-size="6.2" fill="#7b7f9c" stroke="#7b7f9c" stroke-width="0.2" letter-spacing="1.0" font-weight="normal" text-anchor="start">MOONEE</text><text x="931" y="314" font-size="6.2" fill="#7b7f9c" stroke="#7b7f9c" stroke-width="0.2" letter-spacing="1.0" font-weight="normal" text-anchor="start">WYEE</text><text x="1007.8" y="345" font-size="6.2" fill="#7b7f9c" stroke="#7b7f9c" stroke-width="0.2" letter-spacing="1.0" font-weight="normal" text-anchor="start">BUDGEWOI</text><text x="1007.8" y="352.5" font-size="6.2" fill="#7b7f9c" stroke="#7b7f9c" stroke-width="0.2" letter-spacing="1.0" font-weight="normal" text-anchor="start">PENINSULA</text><text x="933.8" y="358" font-size="6.2" fill="#7b7f9c" stroke="#7b7f9c" stroke-width="0.2" letter-spacing="1.0" font-weight="normal" text-anchor="start">CHARMHAVEN</text><text x="949.4" y="392" font-size="6.2" fill="#7b7f9c" stroke="#7b7f9c" stroke-width="0.2" letter-spacing="1.0" font-weight="normal" text-anchor="start">GOROKAN</text><text x="1070" y="244" font-size="6.2" fill="#7b7f9c" stroke="#7b7f9c" stroke-width="0.2" letter-spacing="1.0" font-weight="normal" text-anchor="start">BEACH</text><text x="974" y="436.3" font-size="6.2" fill="#7b7f9c" stroke="#7b7f9c" stroke-width="0.2" letter-spacing="1.0" font-weight="normal" text-anchor="start">MAGENTA</text><text x="926" y="520.3" font-size="6.2" fill="#7b7f9c" stroke="#7b7f9c" stroke-width="0.2" letter-spacing="1.0" font-weight="normal" text-anchor="start">BATEAU</text><text x="933.3" y="528.5" font-size="6.2" fill="#7b7f9c" stroke="#7b7f9c" stroke-width="0.2" letter-spacing="1.0" font-weight="normal" text-anchor="start">BAY</text><text x="910" y="547" font-size="6.2" fill="#7b7f9c" stroke="#7b7f9c" stroke-width="0.2" letter-spacing="1.0" font-weight="normal" text-anchor="start">FORRESTERS</text><text x="921.7" y="555.2" font-size="6.2" fill="#7b7f9c" stroke="#7b7f9c" stroke-width="0.2" letter-spacing="1.0" font-weight="normal" text-anchor="start">BEACH</text><text x="704" y="433" font-size="6.2" fill="#7b7f9c" stroke="#7b7f9c" stroke-width="0.2" letter-spacing="1.0" font-weight="normal" text-anchor="start">CENTRAL</text><text x="699.6" y="441.3" font-size="6.2" fill="#7b7f9c" stroke="#7b7f9c" stroke-width="0.2" letter-spacing="1.0" font-weight="normal" text-anchor="start">MANGROVE</text><text x="636" y="450" font-size="6.2" fill="#7b7f9c" stroke="#7b7f9c" stroke-width="0.2" letter-spacing="1.0" font-weight="normal" text-anchor="start">VE</text><text x="636" y="477" font-size="6.2" fill="#7b7f9c" stroke="#7b7f9c" stroke-width="0.2" letter-spacing="1.0" font-weight="normal" text-anchor="start">GROVE</text><text x="636" y="485" font-size="6.2" fill="#7b7f9c" stroke="#7b7f9c" stroke-width="0.2" letter-spacing="1.0" font-weight="normal" text-anchor="start">EEK</text><text x="636" y="523.4" font-size="6.2" fill="#7b7f9c" stroke="#7b7f9c" stroke-width="0.2" letter-spacing="1.0" font-weight="normal" text-anchor="start">LENGROVE</text><text x="636" y="564" font-size="6.2" fill="#7b7f9c" stroke="#7b7f9c" stroke-width="0.2" letter-spacing="1.0" font-weight="normal" text-anchor="start">ANGROVE</text><text x="878" y="477" font-size="6.2" fill="#7b7f9c" stroke="#7b7f9c" stroke-width="0.2" letter-spacing="1.0" font-weight="normal" text-anchor="start">BERKELEY</text><text x="886.7" y="485.4" font-size="6.2" fill="#7b7f9c" stroke="#7b7f9c" stroke-width="0.2" letter-spacing="1.0" font-weight="normal" text-anchor="start">VALE</text><text x="828.7" y="525" font-size="6.2" fill="#7b7f9c" stroke="#7b7f9c" stroke-width="0.2" letter-spacing="1.0" font-weight="normal" text-anchor="start">LISAROW</text><text x="812.8" y="551" font-size="6.2" fill="#7b7f9c" stroke="#7b7f9c" stroke-width="0.2" letter-spacing="1.0" font-weight="normal" text-anchor="start">WYOMING</text><text x="857.7" y="551" font-size="6.2" fill="#7b7f9c" stroke="#7b7f9c" stroke-width="0.2" letter-spacing="1.0" font-weight="normal" text-anchor="start">HOLGATE</text></g><g><text x="735" y="360.5" font-size="8.3" fill="#333" stroke="#333" stroke-width="0.1" letter-spacing="0" font-weight="normal" text-anchor="start">Yarramalong</text><text x="954.5" y="332.5" font-size="8.3" fill="#333" stroke="#333" stroke-width="0.1" letter-spacing="0" font-weight="normal" text-anchor="start">Doyalson</text><text x="994.8" y="374.6" font-size="8.3" fill="#333" stroke="#333" stroke-width="0.1" letter-spacing="0" font-weight="normal" text-anchor="start">Budgewoi</text><text x="991.3" y="402.4" font-size="8.3" fill="#333" stroke="#333" stroke-width="0.1" letter-spacing="0" font-weight="normal" text-anchor="start">Noraville</text><text x="933.3" y="491" font-size="8.3" fill="#333" stroke="#333" stroke-width="0.1" letter-spacing="0" font-weight="normal" text-anchor="start">The Entrance</text><text x="876.6" y="421.6" font-size="8.3" fill="#333" stroke="#333" stroke-width="0.1" letter-spacing="0" font-weight="normal" text-anchor="start">Wyong</text></g><text x="920.3" y="450.6" font-size="6.5" fill="#4a7cc4" stroke="#4a7cc4" stroke-width="0.2" letter-spacing="0" font-weight="normal" text-anchor="start">Tuggerah Lake</text><text x="643" y="405" font-size="6.8" fill="#3f8f3f" stroke="#3f8f3f" stroke-width="0.2" letter-spacing="0" font-weight="bold" text-anchor="start">McPherson</text><text x="641.6" y="414" font-size="6.8" fill="#3f8f3f" stroke="#3f8f3f" stroke-width="0.2" letter-spacing="0" font-weight="bold" text-anchor="start">State Forest</text><text x="720.8" y="239" font-size="6.8" fill="#3f8f3f" stroke="#3f8f3f" stroke-width="0.2" letter-spacing="0" font-weight="bold" text-anchor="start">Olney State Forest</text><path d="M660,388 l-3,4 h2 l-2,3 h6 l-2,-3 h2 z" fill="#3f8f3f"/><rect x="659.4" y="394" width="1.2" height="2" fill="#3f8f3f"/><path d="M650.1,243.6 H659.3000000000001 V249.2 Q659.3000000000001,253.2 654.7,253.79999999999998 Q650.1,253.2 650.1,249.2 Z" fill="#3a45a8"/><text x="654.7" y="250.2" font-size="4.6" fill="#fff" text-anchor="middle">33</text><path d="M672.1,256.4 H681.3000000000001 V262 Q681.3000000000001,266 676.7,266.6 Q672.1,266 672.1,262 Z" fill="#3a45a8"/><text x="676.7" y="263" font-size="4.6" fill="#fff" text-anchor="middle">33</text><path d="M686.4,289.0 H695.6 V294.6 Q695.6,298.6 691,299.20000000000005 Q686.4,298.6 686.4,294.6 Z" fill="#3a45a8"/><text x="691" y="295.6" font-size="4.6" fill="#fff" text-anchor="middle">33</text><path d="M701.4,397.79999999999995 H710.6 V403.4 Q710.6,407.4 706,408.0 Q701.4,407.4 701.4,403.4 Z" fill="#3a45a8"/><text x="706" y="404.4" font-size="4.6" fill="#fff" text-anchor="middle">33</text><rect x="904.4000000000001" y="343.0" width="10.6" height="7" rx="1.2" fill="#1f8c3b"/><text x="909.7" y="348.5" font-size="5.4" fill="#dfe58a" text-anchor="middle" font-weight="bold">M1</text><rect x="877.2" y="362.7" width="10.6" height="7" rx="1.2" fill="#1f8c3b"/><text x="882.5" y="368.2" font-size="5.4" fill="#dfe58a" text-anchor="middle" font-weight="bold">M1</text><rect x="923.2" y="261.5" width="10.6" height="7" rx="1.2" fill="#1f8c3b"/><text x="928.5" y="267" font-size="5.4" fill="#dfe58a" text-anchor="middle" font-weight="bold">M1</text><rect x="923.2" y="275.8" width="10.6" height="7" rx="1.2" fill="#1f8c3b"/><text x="928.5" y="281.3" font-size="5.4" fill="#dfe58a" text-anchor="middle" font-weight="bold">M1</text><rect x="817.7" y="493.5" width="10.6" height="7" rx="1.2" fill="#1f8c3b"/><text x="823" y="499" font-size="5.4" fill="#dfe58a" text-anchor="middle" font-weight="bold">M1</text><rect x="1046.7" y="280.3" width="10.6" height="7" rx="1.2" fill="#1f8c3b"/><text x="1052" y="285.8" font-size="5.4" fill="#dfe58a" text-anchor="middle" font-weight="bold">A43</text><rect x="1016.7" y="317.5" width="10.6" height="7" rx="1.2" fill="#1f8c3b"/><text x="1022" y="323" font-size="5.4" fill="#dfe58a" text-anchor="middle" font-weight="bold">A43</text><path d="M927.5,398 C923,393 922,391 922,388.5 A5.5,5.5 0 0 1 933,388.5 C933,391 932,393 927.5,398 Z" fill="#f08a12"/><circle cx="927.5" cy="388.5" r="1.7" fill="#fff"/><rect x="1189.5" y="492" width="18" height="52.5" rx="3" fill="#fff" stroke="rgba(0,0,0,.12)" stroke-width=".6"/><path d="M1189.5,509.5 H1207.5 M1189.5,527 H1207.5" stroke="#e6e6e6" stroke-width=".8"/><path d="M1198.5,497.5 V505 M1194.8,501.2 H1202.2 M1194.8,518.6 H1202.2" stroke="#333" stroke-width="1.4"/><path d="M1198.5,531 L1201,535.5 H1196 Z" fill="#333"/><path d="M1198.5,540 L1201,535.5 H1196 Z" fill="#ccc"/><rect x="1052" y="552.5" width="167" height="11.5" fill="rgba(255,255,255,.5)"/><text x="1054.5" y="561.2" font-size="7.4" fill="#333" textLength="162" lengthAdjust="spacingAndGlyphs">© Mapbox © OpenStreetMap <tspan font-weight="bold">Improve this map</tspan></text><circle cx="646.5" cy="554" r="5" fill="#fff" stroke="rgba(0,0,0,.3)" stroke-width=".7"/><circle cx="646.5" cy="554" r="2.6" fill="#6a6a6a"/><path d="M645.2,555.5 L646.2,552.4 L648,552.6 L647,555.2 Z" fill="#fff"/><text x="653" y="557.6" font-size="10.5" font-weight="bold" fill="#fff" stroke="rgba(60,60,60,.75)" stroke-width="1.3" paint-order="stroke" letter-spacing=".2">mapbox</text></svg></div>
  <div class="t" style="left:37px;width:583px;text-align:center;top:525.5px;font-size:8.85px;color:#555">Wadalba Sports Complex, Louisiana Road, Kanwal 2259 NSW Australia</div>
  <div class="a" style="left:182.7px;top:545px;width:292px;height:26px;border-radius:4px;background:#f08c11"></div>
  <div class="t" style="left:182.7px;width:292px;text-align:center;top:553.5px;font-size:9.4px;font-weight:bold;color:#fff"><svg width="12" height="9" viewBox="0 0 12 9" style="vertical-align:-1px;margin-right:1px"><path d="M2.2 4 L3.3 1.3 Q3.6 0.6 4.4 0.6 H7.6 Q8.4 0.6 8.7 1.3 L9.8 4 Q11.2 4.3 11.2 5.5 V7.4 H0.8 V5.5 Q0.8 4.3 2.2 4 Z" fill="#fff"/><circle cx="3.2" cy="7.4" r="1.2" fill="#f08c11"/><circle cx="8.8" cy="7.4" r="1.2" fill="#f08c11"/><path d="M3.4 3.9 L4.1 2 H7.9 L8.6 3.9 Z" fill="#f08c11"/></svg> Get Directions</div>
  <div class="a" style="left:574px;top:533px;width:82px;height:16px;border-radius:4px;background:#18181b"></div>
  <svg class="a" style="left:579px;top:536px" width="10" height="10" viewBox="0 0 10 10"><path d="M1 5.5 L5.2 1 L4.4 4.3 H9 L4.8 9 L5.6 5.5 Z" fill="#fff"/></svg>
  <div class="t" style="left:593px;top:537px;font-size:7.6px;color:#fff">Made with <b>Glide</b></div>
</div>
<div id="sb" class="a">
<div class="a" style="left:0;top:0;width:10px;height:11px;background:#fff"></div>
<svg class="a" style="left:1.5px;top:2.5px" width="7" height="6" viewBox="0 0 7 6"><path d="M1 4.5 L3.5 1.8 L6 4.5" stroke="#555" stroke-width="1.4" fill="none"/></svg>
<div class="a" style="left:0;top:11px;width:10px;height:483px;background:#cbcbcb"></div>
<div class="a" style="left:9px;top:11px;width:1px;height:483px;background:#c4c4c8"></div>
<div class="a" style="left:9px;top:257px;width:4px;height:18px;background:#fff"></div>
<div class="a" style="left:0;top:494px;width:10px;height:66px;background:#f3f3f3"></div>
<svg class="a" style="left:1.5px;top:550px" width="7" height="6" viewBox="0 0 7 6"><path d="M1 1.5 L3.5 4.2 L6 1.5" stroke="#555" stroke-width="1.4" fill="none"/></svg>
</div>
</body></html>
